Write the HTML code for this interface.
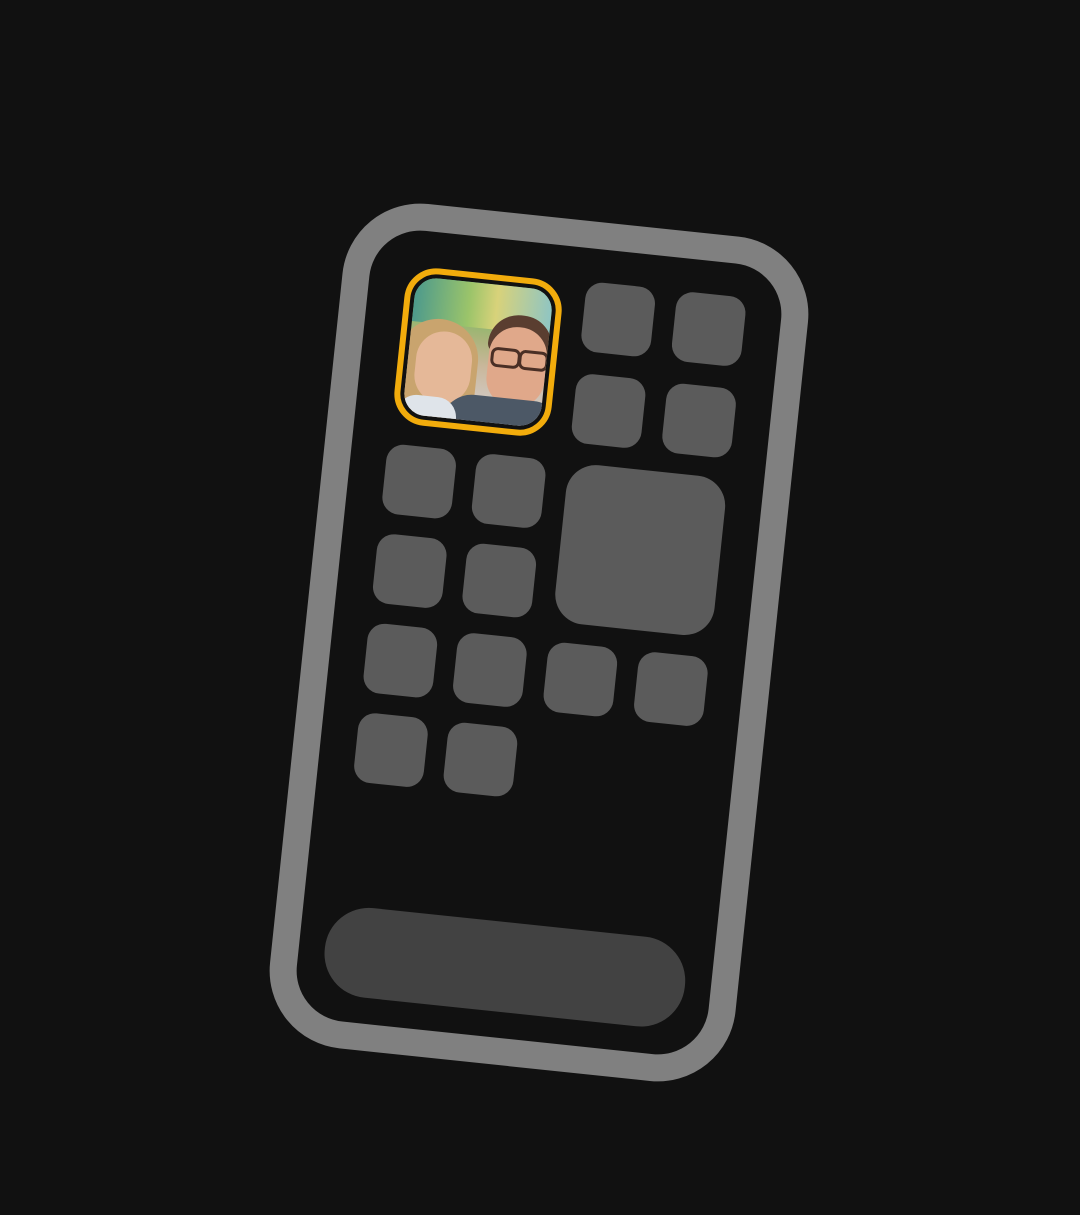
<!DOCTYPE html>
<html><head><meta charset="utf-8"><style>
html,body{margin:0;padding:0;background:#111;width:1080px;height:1215px;overflow:hidden}
#phone{position:absolute;left:305px;top:218px;width:468px;height:849px;box-sizing:border-box;border:27px solid #808080;border-radius:78px;background:#111;transform:rotate(6deg);transform-origin:50% 50%}
.i{position:absolute;width:70px;height:70px;border-radius:17px;background:#5b5b5b}
#big{position:absolute;width:160px;height:160px;border-radius:30px;background:#5b5b5b}
#dock{position:absolute;width:362px;height:90px;border-radius:44px;background:#424242}
#photo{position:absolute;width:158px;height:158px;box-sizing:border-box;border:6px solid #f2ac0c;border-radius:32px;background:#111;padding:4px}
#pin{position:relative;width:100%;height:100%;border-radius:22px;overflow:hidden;background:linear-gradient(180deg,#6fb3a6 0%,#8ab86a 25%,#a9b47a 40%,#c9b79b 60%,#d6d2d6 100%)}
#pin div{position:absolute}
</style></head><body>
<div id="phone">
<div id="photo" style="left:37px;top:36px">
 <div id="pin">
  <div style="left:0;top:0;width:100%;height:45px;background:linear-gradient(90deg,#4d9a8c,#9bc46a 40%,#d8d27a 60%,#8fc5c3)"></div>
  <div style="left:-10px;top:40px;width:80px;height:110px;border-radius:40px;background:#c9a46e"></div>
  <div style="left:8px;top:52px;width:56px;height:72px;border-radius:28px;background:#e5b898"></div>
  <div style="left:78px;top:28px;width:64px;height:40px;border-radius:32px 32px 10px 10px;background:#5a3e30"></div>
  <div style="left:80px;top:40px;width:58px;height:80px;border-radius:28px;background:#e0a88a"></div>
  <div style="left:82px;top:62px;width:24px;height:14px;border:3px solid #4a2f25;border-radius:7px"></div>
  <div style="left:110px;top:62px;width:24px;height:14px;border:3px solid #4a2f25;border-radius:7px"></div>
  <div style="left:40px;top:112px;width:120px;height:40px;border-radius:30px 30px 0 0;background:#4c5866"></div>
  <div style="left:-6px;top:118px;width:60px;height:40px;border-radius:20px 20px 0 0;background:#dfe4ea"></div>
 </div>
</div>
<div class="i" style="left:217px;top:33px"></div>
<div class="i" style="left:308px;top:33px"></div>
<div class="i" style="left:217px;top:125px"></div>
<div class="i" style="left:308px;top:125px"></div>
<div class="i" style="left:36px;top:215px"></div>
<div class="i" style="left:126px;top:215px"></div>
<div id="big" style="left:218px;top:215px"></div>
<div class="i" style="left:36px;top:305px"></div>
<div class="i" style="left:126px;top:305px"></div>
<div class="i" style="left:36px;top:395px"></div>
<div class="i" style="left:126px;top:395px"></div>
<div class="i" style="left:217px;top:395px"></div>
<div class="i" style="left:308px;top:395px"></div>
<div class="i" style="left:36px;top:485px"></div>
<div class="i" style="left:126px;top:485px"></div>
<div id="dock" style="left:26px;top:679px"></div>
</div>
</body></html>
